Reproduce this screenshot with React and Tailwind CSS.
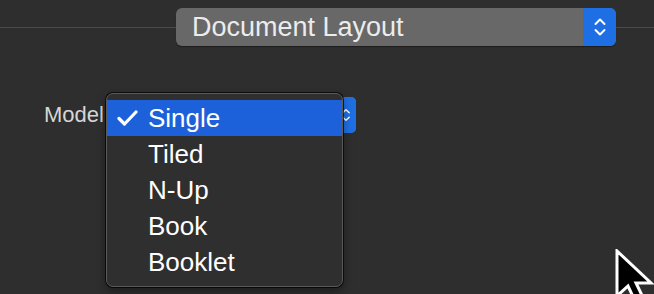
import React from 'react'

const items = ['Single', 'Tiled', 'N-Up', 'Book', 'Booklet']

function Chevrons({ className }) {
  return (
    <svg className={className} width="14" height="22" viewBox="0 0 14 22" fill="none">
      <path d="M2.5 8 L7 3.5 L11.5 8" stroke="white" strokeWidth="2" strokeLinecap="round" strokeLinejoin="round" />
      <path d="M2.5 14 L7 18.5 L11.5 14" stroke="white" strokeWidth="2" strokeLinecap="round" strokeLinejoin="round" />
    </svg>
  )
}

function Check() {
  return (
    <svg width="21" height="16" viewBox="0 0 21 16" fill="none">
      <path d="M2 8.5 L7.5 14 L19 2" stroke="white" strokeWidth="3.2" strokeLinecap="round" strokeLinejoin="round" />
    </svg>
  )
}

function Cursor() {
  return (
    <svg width="44" height="60" viewBox="0 0 44 60" className="absolute left-[615px] top-[249px]">
      <path
        d="M2 2 L2 47 L13 37 L21 54 L29 50.5 L21 34 L36 34 Z"
        fill="black"
        stroke="white"
        strokeWidth="3"
        strokeLinejoin="miter"
      />
    </svg>
  )
}

export default function App() {
  return (
    <div className="relative w-[654px] h-[294px] overflow-hidden bg-[#2e2e2e] font-['Liberation_Sans',Arial,sans-serif]">
      {/* barre du haut */}
      <div className="flex items-center pt-[8px]">
        <div className="w-[176px] h-px bg-[#4a4a4a]" />
        <div className="flex w-[440px] h-[38px] rounded-[6px] bg-[#686868] shadow-[0_1px_1px_rgba(0,0,0,0.4)]">
          <div className="flex-1 flex items-center pl-[16px] text-[27px] text-[#ececec] leading-none">
            Document Layout
          </div>
          <div className="w-[33px] flex items-center justify-center rounded-r-[6px] bg-[#1f6fe4]">
            <Chevrons />
          </div>
        </div>
        <div className="flex-1 h-px bg-[#4a4a4a]" />
      </div>

      {/* ligne Model */}
      <div className="flex items-center mt-[51px] pl-[44px]">
        <span className="text-[22px] text-[#d6d6d6] leading-none">Model:</span>
        <div className="ml-[4px] flex w-[242px] h-[36px] rounded-[5px] bg-[#686868]">
          <div className="flex-1" />
          <div className="w-[20px] flex items-center justify-center rounded-r-[5px] bg-[#1f6fe4]">
            <Chevrons className="w-[10px] h-[18px]" />
          </div>
        </div>
      </div>

      {/* menu déroulant */}
      <div className="absolute left-[106px] top-[93px] w-[237px] h-[194px] rounded-[7px] bg-[#2f2f2f] border border-[#5a5a5a] shadow-[0_0_0_1px_rgba(0,0,0,0.7),0_4px_10px_rgba(0,0,0,0.4)] py-[6px]">
        {items.map((item, i) => (
          <div
            key={item}
            className={
              i === 0
                ? 'flex items-center h-[36px] bg-[#1c61d9] text-white text-[26px]'
                : 'flex items-center h-[36px] text-white text-[26px]'
            }
          >
            <div className="w-[41px] flex justify-end pr-[10px]">{i === 0 && <Check />}</div>
            <span className="leading-[36px]">{item}</span>
          </div>
        ))}
      </div>

      <Cursor />
    </div>
  )
}
